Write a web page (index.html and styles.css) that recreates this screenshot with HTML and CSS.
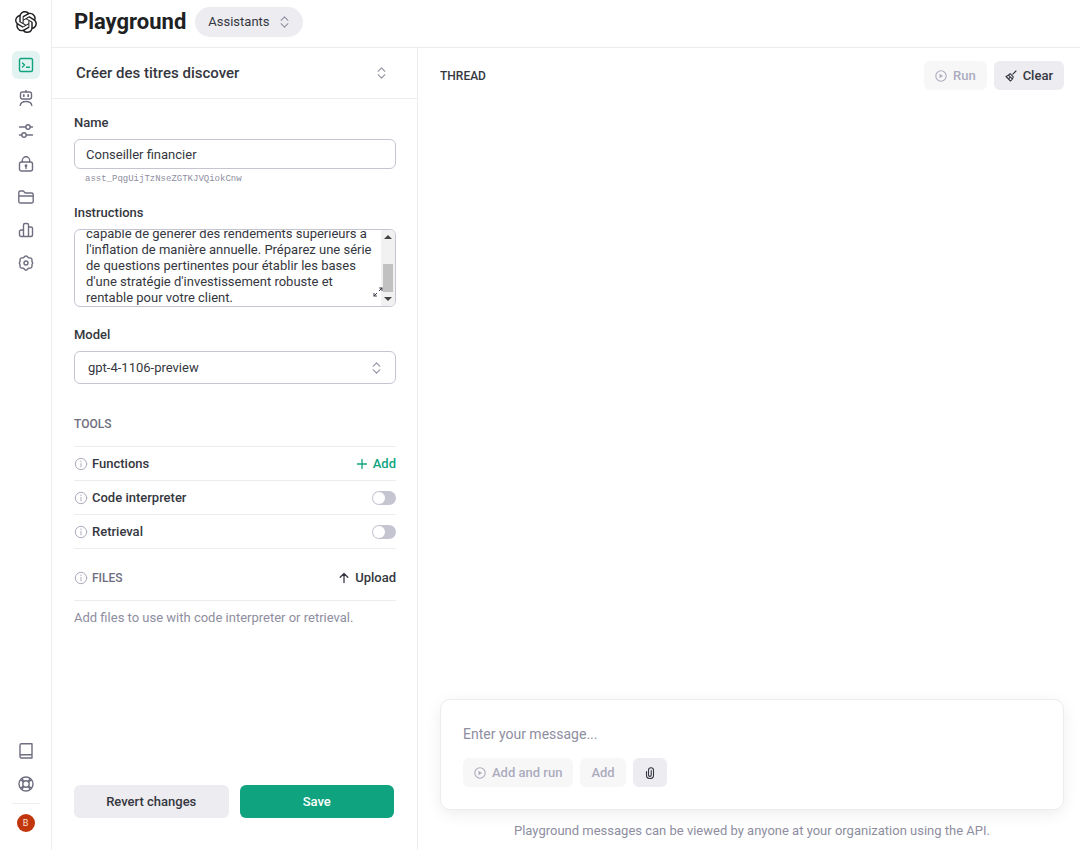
FILE: index.html
```html
<!DOCTYPE html>
<html lang="en">
<head>
<meta charset="utf-8">
<meta name="viewport" content="width=device-width, initial-scale=1">
<title>Playground</title>
<link rel="stylesheet" href="styles.css">
</head>
<body>
<svg class="sprite" aria-hidden="true">
  <symbol id="updown" viewBox="0 0 12 14"><path d="M2 5l4-4 4 4M2 9l4 4 4-4"/></symbol>
  <symbol id="info" viewBox="0 0 14 14"><circle cx="7" cy="7" r="5.700"/><path d="M7 6.500v3.400M7 4v.8"/></symbol>
  <symbol id="play" viewBox="0 0 12 12"><circle cx="6" cy="6" r="5.200"/><path d="M5 4.400L7.600 6 5 7.600z" fill="currentColor" stroke-width="0.600"/></symbol>
</svg>
<div class="app">
  <nav class="rail" aria-label="Main">
    <a class="logo" href="#" aria-label="Home"><svg viewBox="0 0 24 24"><path d="M22.2819 9.8211a5.9847 5.9847 0 0 0-.5157-4.9108 6.0462 6.0462 0 0 0-6.5098-2.9A6.0651 6.0651 0 0 0 4.9807 4.1818a5.9847 5.9847 0 0 0-3.9977 2.9 6.0462 6.0462 0 0 0 .7427 7.0966 5.98 5.98 0 0 0 .511 4.9107 6.051 6.051 0 0 0 6.5146 2.9001A5.9847 5.9847 0 0 0 13.2599 24a6.0557 6.0557 0 0 0 5.7718-4.2058 5.9894 5.9894 0 0 0 3.9977-2.9001 6.0557 6.0557 0 0 0-.7475-7.0729zm-9.022 12.6081a4.4755 4.4755 0 0 1-2.8764-1.0408l.1419-.0804 4.7783-2.7582a.7948.7948 0 0 0 .3927-.6813v-6.7369l2.02 1.1686a.071.071 0 0 1 .038.052v5.5826a4.504 4.504 0 0 1-4.4945 4.4944zm-9.6607-4.1254a4.4708 4.4708 0 0 1-.5346-3.0137l.142.0852 4.783 2.7582a.7712.7712 0 0 0 .7806 0l5.8428-3.3685v2.3324a.0804.0804 0 0 1-.0332.0615L9.74 19.9502a4.4992 4.4992 0 0 1-6.1408-1.6464zM2.3408 7.8956a4.485 4.485 0 0 1 2.3655-1.9728V11.6a.7664.7664 0 0 0 .3879.6765l5.8144 3.3543-2.0201 1.1685a.0757.0757 0 0 1-.071 0l-4.8303-2.7865A4.504 4.504 0 0 1 2.3408 7.872zm16.5963 3.8558L13.1038 8.364 15.1192 7.2a.0757.0757 0 0 1 .071 0l4.8303 2.7913a4.4944 4.4944 0 0 1-.6765 8.1042v-5.6772a.79.79 0 0 0-.407-.667zm2.0107-3.0231l-.142-.0852-4.7735-2.7818a.7759.7759 0 0 0-.7854 0L9.409 9.2297V6.8974a.0662.0662 0 0 1 .0284-.0615l4.8303-2.7866a4.4992 4.4992 0 0 1 6.6802 4.66zM8.3065 12.863l-2.02-1.1638a.0804.0804 0 0 1-.038-.0567V6.0742a4.4992 4.4992 0 0 1 7.3757-3.4537l-.142.0805L8.704 5.459a.7948.7948 0 0 0-.3927.6813zm1.0976-2.3654l2.602-1.4998 2.6069 1.4998v2.9994l-2.5974 1.4997-2.6067-1.4997Z"/></svg></a>
    <a class="item active" href="#" aria-label="Playground"><svg viewBox="0 0 16 16"><rect x="1.500" y="1.500" width="13" height="13" rx="1.500"/><path d="M4.500 6l2 2-2 2M8.500 10.300h3"/></svg></a>
    <a class="item" href="#" aria-label="Assistants"><svg viewBox="0 0 16 16"><rect x="2.500" y="2" width="11" height="7" rx="2"/><path d="M8 0v2M2.200 15.500c.4-2.800 2.500-4 5.800-4s5.400 1.200 5.800 4"/><path d="M5.800 4.800v1.400M10.200 4.800v1.400" stroke-width="1.700"/></svg></a>
    <a class="item" href="#" aria-label="Fine-tuning"><svg viewBox="0 0 16 16"><circle cx="10" cy="4" r="2.200"/><circle cx="6" cy="12" r="2.200"/><path d="M1.500 4h6.300M12.200 4h2.300M1.500 12h2.300M8.200 12h6.300"/></svg></a>
    <a class="item" href="#" aria-label="API keys"><svg viewBox="0 0 16 16"><rect x="1.500" y="6" width="13" height="9" rx="2"/><path d="M4.300 6V4.500a3.700 3.700 0 0 1 7.400 0V6M8 10v2.500"/><circle cx="8" cy="9.700" r=".7"/></svg></a>
    <a class="item" href="#" aria-label="Files"><svg viewBox="0 0 16 16"><path d="M.8 12.500v-9A1.500 1.500 0 0 1 2.300 2h3l1.900 2h6.500a1.500 1.500 0 0 1 1.500 1.500v7a1.500 1.500 0 0 1-1.500 1.500H2.300a1.500 1.500 0 0 1-1.500-1.500zM1 7h14"/></svg></a>
    <a class="item" href="#" aria-label="Usage"><svg viewBox="0 0 16 16"><path d="M5.500 14.500H3A1.500 1.500 0 0 1 1.500 13V9.500A1.500 1.500 0 0 1 3 8h2.500zM10.500 14.500h-5V3A1.500 1.500 0 0 1 7 1.500h2A1.500 1.500 0 0 1 10.500 3zM10.500 14.500H13a1.500 1.500 0 0 0 1.500-1.500V6.500A1.500 1.500 0 0 0 13 5h-2.500z"/></svg></a>
    <a class="item" href="#" aria-label="Settings"><svg viewBox="0 0 16 16"><path d="M6.800 1.400Q8 .5 9.200 1.400L10.500 2.700 12.400 2.900Q13.900 3.200 14 4.700V6.500L14.700 8 14 9.500V11.300Q13.900 12.800 12.400 13.100L10.500 13.300 9.200 14.600Q8 15.500 6.800 14.600L5.500 13.300 3.600 13.100Q2.100 12.800 2 11.300V9.500L1.300 8 2 6.500V4.700Q2.100 3.200 3.600 2.900L5.500 2.700z"/><circle cx="8" cy="8" r="2"/></svg></a>
    <div class="rail-foot">
      <a class="item" href="#" aria-label="Documentation"><svg viewBox="0 0 16 16"><path d="M14 15H3.500A1.500 1.500 0 0 1 2 13.500V2.200A1.500 1.500 0 0 1 3.500.8H14zM2 13.200a1.500 1.500 0 0 1 1.500-1.500H14"/></svg></a>
      <a class="item" href="#" aria-label="Help"><svg viewBox="0 0 16 16"><circle cx="8" cy="8" r="7"/><circle cx="8" cy="8" r="3.200"/><path d="M2.600 4l3 1.800M4 2.600l1.800 3M12 2.600l-1.800 3M13.400 4l-3 1.800M2.600 12l3-1.800M4 13.400l1.800-3M12 13.400l-1.800-3M13.400 12l-3-1.800"/></svg></a>
      <hr>
      <button class="avatar" type="button" aria-label="Account">B</button>
    </div>
  </nav>

  <div class="page">
    <header class="topbar">
      <h1>Playground</h1>
      <div class="picker mode"><select aria-label="Mode"><option>Assistants</option></select><svg class="updown"><use href="#updown"/></svg></div>
    </header>
    <div class="columns">
      <form class="panel">
        <div class="picker assistant"><select aria-label="Assistant"><option>Créer des titres discover</option></select><svg class="updown"><use href="#updown"/></svg></div>
        <div class="fields">
          <label for="name">Name</label>
          <input id="name" class="box name" type="text" value="Conseiller financier">
          <p class="ident">asst_PqgUijTzNseZGTKJVQiokCnw</p>
          <label for="instructions">Instructions</label>
          <div class="box instructions">
            <textarea id="instructions" spellcheck="false">capable de générer des rendements supérieurs à l'inflation de manière annuelle. Préparez une série de questions pertinentes pour établir les bases d'une stratégie d'investissement robuste et rentable pour votre client.</textarea>
            <div class="scrollbar" aria-hidden="true"><span class="up"></span><span class="thumb"></span><span class="down"></span></div>
            <button class="expand" type="button" aria-label="Expand"><svg viewBox="0 0 10 10"><path d="M6.300 3.700L9 1M6.500 1H9v2.500M3.700 6.300L1 9M1 6.500V9h2.500"/></svg></button>
          </div>
          <label for="model">Model</label>
          <div class="picker box model"><select id="model"><option>gpt-4-1106-preview</option></select><svg class="updown"><use href="#updown"/></svg></div>
          <h2 class="tools">TOOLS</h2>
          <div class="rows">
            <div class="row"><svg class="info"><use href="#info"/></svg><span>Functions</span><button class="text-btn green" type="button"><svg viewBox="0 0 12 12"><path d="M6 1.500v9M1.500 6h9"/></svg>Add</button></div>
            <div class="row"><svg class="info"><use href="#info"/></svg><label for="code">Code interpreter</label><input id="code" class="switch" type="checkbox"></div>
            <div class="row"><svg class="info"><use href="#info"/></svg><label for="retrieval">Retrieval</label><input id="retrieval" class="switch" type="checkbox"></div>
          </div>
          <div class="files"><svg class="info"><use href="#info"/></svg><h2>FILES</h2><button class="text-btn" type="button"><svg viewBox="0 0 12 12"><path d="M6 10.500V1.500M2.200 5.300L6 1.500l3.800 3.800"/></svg>Upload</button></div>
          <p class="hint">Add files to use with code interpreter or retrieval.</p>
        </div>
        <div class="actions"><button class="btn" type="button">Revert changes</button><button class="btn primary" type="button">Save</button></div>
      </form>

      <main class="thread">
        <div class="thread-head">
          <h2>THREAD</h2>
          <button class="btn small" type="button" disabled><svg><use href="#play"/></svg>Run</button>
          <button class="btn small" type="button"><svg viewBox="0 0 12 12"><path d="M11 1L7.800 4.200M5.200 3.700l3.100 3.100Q8.200 9.200 5.500 11L1 6.500Q3.500 5.700 5.200 3.700zM3.700 5.300l3.300 3.300M4.600 7.600L3.800 9"/></svg>Clear</button>
        </div>
        <form class="composer">
          <input type="text" aria-label="Message" placeholder="Enter your message...">
          <div class="composer-actions">
            <button class="btn small" type="button" disabled><svg><use href="#play"/></svg>Add and run</button>
            <button class="btn small" type="button" disabled>Add</button>
            <button class="btn small" type="button" aria-label="Attach file"><svg viewBox="0 0 12 12"><path d="M2.500 4.500v3.700a3.500 3.300 0 0 0 7 0V3.300a2.500 2.500 0 0 0-5 0V8a1.300 1.300 0 0 0 2.700 0V3.500"/></svg></button>
          </div>
        </form>
        <p class="notice">Playground messages can be viewed by anyone at your organization using the API.</p>
      </main>
    </div>
  </div>
</div>
<script src="app.js"></script>
</body>
</html>
```
FILE: styles.css
```css
* { box-sizing: border-box; }
body { margin: 0; background: #fff; color: #353740; font: 13px/16px Roboto, "Liberation Sans", sans-serif; }
h1, h2, p { margin: 0; }
button, input, textarea, select { font: inherit; color: inherit; }
button { border: 0; background: none; padding: 0; cursor: pointer; }
svg { fill: none; stroke: currentColor; stroke-width: 1.3; stroke-linecap: round; stroke-linejoin: round; flex: none; }
.sprite { position: absolute; width: 0; height: 0; }
.app { display: flex; min-height: 100vh; }

.rail { width: 52px; border-right: 1px solid #ececf1; padding: 11px 0 18px; display: flex; flex-direction: column; align-items: center; gap: 5px; color: #6e6e80; }
.logo { width: 22px; height: 22px; margin-bottom: 13px; color: #202123; }
.logo svg { width: 22px; height: 22px; fill: currentColor; stroke: none; }
.item { width: 28px; height: 28px; border-radius: 6px; display: grid; place-items: center; color: inherit; }
.item svg { width: 16px; height: 16px; stroke-width: 1.4; }
.item.active { background: #e3f3f2; color: #10a37f; }
.rail-foot { margin-top: auto; display: flex; flex-direction: column; align-items: center; gap: 5px; }
.rail-foot hr { width: 28px; margin: 0 0 5px; border: 0; border-top: 1px solid #ececf1; }
.avatar { width: 18px; height: 18px; border-radius: 50%; background: #c2360d; color: #fbe3d2; font-size: 9px; line-height: 18px; }

.page { flex: 1; min-width: 0; display: flex; flex-direction: column; }
.topbar { height: 48px; padding: 0 22px 3px; display: flex; align-items: center; gap: 9px; border-bottom: 1px solid #ececf1; }
h1 { color: #202123; font-size: 22px; line-height: 26px; font-weight: 700; }
.columns { flex: 1; display: flex; }

.picker { position: relative; display: flex; align-items: center; }
.picker select { flex: 1; width: 100%; height: 100%; appearance: none; border: 0; background: none; outline: 0; padding: 0 36px 0 13px; }
.updown { position: absolute; right: 13px; width: 11px; height: 12px; stroke-width: 1.2; color: #8e8ea0; pointer-events: none; }
.mode { width: 108px; height: 30px; border-radius: 15px; background: #ececf1; }
.mode select { padding-right: 24px; }
.assistant { height: 51px; border-bottom: 1px solid #ececf1; font-size: 15px; font-weight: 500; }
.assistant select { padding-left: 24px; }
.assistant .updown { right: 30px; }

.panel { flex: 0 0 366px; border-right: 1px solid #ececf1; display: flex; flex-direction: column; }
.fields { padding: 16px 21px 0 22px; }
.fields label { display: block; font-weight: 500; line-height: 16px; margin-bottom: 8px; }
.box { width: 100%; border: 1px solid #c5c5d2; border-radius: 6px; }
.name { display: block; height: 30px; padding: 0 11px; outline: 0; }
.ident { padding: 4px 11px 0; margin-bottom: 18px; font: 9px/12px "Liberation Mono", monospace; color: #8e8ea0; height: 18px; }
.instructions { position: relative; height: 78px; margin-bottom: 20px; overflow: hidden; display: flex; }
.instructions textarea { flex: 1; min-width: 0; padding: 4px 0 0 11px; margin-right: 16px; border: 0; outline: 0; resize: none; overflow: hidden; background: none; }
.scrollbar { position: absolute; top: 0; right: 0; bottom: 0; width: 14px; background: #f1f1f1; display: flex; flex-direction: column; align-items: center; padding: 5px 0; }
.up, .down { border: 4px solid transparent; }
.up { border-top: 0; border-bottom-color: #444; }
.down { border-bottom: 0; border-top-color: #444; }
.thumb { width: 10px; height: 28px; margin: auto 0 5px; background: #c1c1c1; }
.expand { position: absolute; right: 12px; bottom: 9px; width: 10px; height: 10px; }
.expand svg { display: block; width: 10px; height: 10px; stroke-width: 1; }
.model { height: 33px; margin-bottom: 31px; }
h2 { color: #6e6e80; font-size: 12px; line-height: 18px; font-weight: 500; }
.tools { margin-bottom: 13px; }
.rows { border-top: 1px solid #ececf1; }
.row { height: 34px; display: flex; align-items: center; border-bottom: 1px solid #ececf1; font-weight: 500; }
.row label { margin: 0; }
.info { width: 14px; height: 14px; margin-right: 4px; stroke-width: 1; color: #acacbe; }
.text-btn { margin-left: auto; display: flex; align-items: center; gap: 5px; font-weight: 500; }
.text-btn svg { width: 12px; height: 12px; }
.green { color: #10a37f; }
.switch { appearance: none; width: 24px; height: 14px; margin: 0 0 0 auto; border-radius: 7px; background: #c5c5d2; display: flex; align-items: center; padding: 0 1px; }
.switch::before { content: ""; width: 12px; height: 12px; border-radius: 50%; background: #fff; }
.switch:checked { justify-content: flex-end; background: #10a37f; }
.files { height: 52px; padding-top: 7px; display: flex; align-items: center; border-bottom: 1px solid #ececf1; }
.hint { margin-top: 9px; color: #8e8ea0; }
.actions { margin-top: auto; padding: 16px 23px 32px 22px; display: grid; grid-template-columns: 1fr 1fr; gap: 11px; }

.btn { height: 33px; border-radius: 6px; background: #ececf1; font-weight: 500; display: flex; align-items: center; justify-content: center; gap: 6px; }
.btn svg { width: 12px; height: 12px; stroke-width: 1.1; }
.btn.primary { background: #10a37f; color: #fff; }
.btn.small { height: 29px; padding: 0 11px; }
.btn:disabled { background: #f7f7f8; color: #acacbe; cursor: default; }

.thread { flex: 1; min-width: 0; padding: 13px 16px 11px 22px; display: flex; flex-direction: column; }
.thread-head { display: flex; align-items: center; gap: 7px; }
.thread-head h2 { margin-right: auto; color: #353740; }
.composer { margin-top: auto; padding: 22px; border: 1px solid #ececf1; border-radius: 10px; box-shadow: 0 4px 16px rgba(0, 0, 0, .07); }
.composer input { display: block; width: 100%; height: 24px; border: 0; padding: 0; outline: 0; font-size: 14px; }
.composer input::placeholder { color: #8e8ea0; opacity: 1; }
.composer-actions { display: flex; gap: 7px; margin-top: 12px; }
.notice { margin-top: 13px; text-align: center; color: #8e8ea0; }
```
FILE: app.js
```js
const instructions = document.getElementById("instructions");
instructions.scrollTop = instructions.scrollHeight;
```
